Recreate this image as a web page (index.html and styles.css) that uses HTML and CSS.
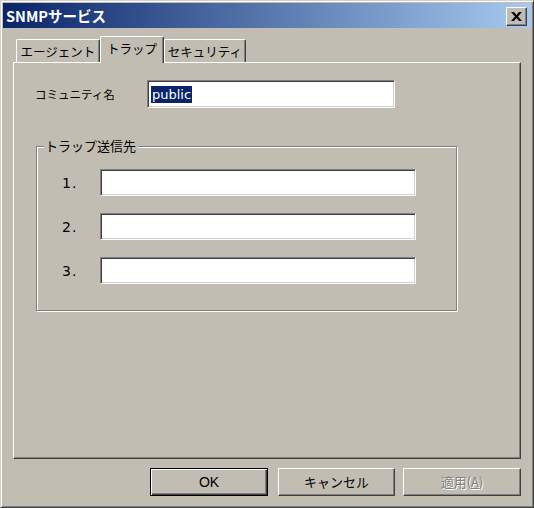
FILE: index.html
```html
<!DOCTYPE html>
<html lang="ja">
<head>
<meta charset="utf-8">
<title>SNMPサービス</title>
<link rel="stylesheet" href="styles.css">
</head>
<body>
<div class="window">
  <div class="titlebar">
    <span class="title">SNMPサービス</span>
    <div class="close">
      <svg width="11" height="9" viewBox="0 0 11 9"><path d="M0 0h3l2.5 3 2.5-3h3l-4 4.5 4 4.5h-3l-2.5-3-2.5 3h-3l4-4.5z" fill="#000"/></svg>
    </div>
  </div>
  <div class="body">
    <div class="tabs">
      <div class="tab tab-agent">エージェント</div>
      <div class="tab tab-trap active">トラップ</div>
      <div class="tab tab-sec">セキュリティ</div>
    </div>
    <div class="panel">
      <div class="field-row">
        <span class="label">コミュニティ名</span>
        <div class="input community"><span class="sel">public</span></div>
      </div>
      <div class="group">
        <span class="legend">トラップ送信先</span>
        <div class="dest"><span class="num">1.</span><div class="input dest-input"></div></div>
        <div class="dest"><span class="num">2.</span><div class="input dest-input"></div></div>
        <div class="dest"><span class="num">3.</span><div class="input dest-input"></div></div>
      </div>
    </div>
    <div class="buttons">
      <div class="btn default"><span class="btn-face">OK</span></div>
      <div class="btn cancel"><span class="btn-face">キャンセル</span></div>
      <div class="btn apply disabled"><span class="btn-face">適用(<u>A</u>)</span></div>
    </div>
  </div>
</div>
</body>
</html>
```
FILE: styles.css
```css
html, body {
  margin: 0;
  padding: 0;
  background: #c1bdb2;
}
body {
  font-family: "Noto Sans CJK JP", sans-serif;
  font-size: 12px;
  font-weight: normal;
  color: #000;
}
.window {
  width: 534px;
  height: 508px;
  box-sizing: border-box;
  border: 1px solid;
  border-color: #d4d0c8 #404040 #404040 #d4d0c8;
  box-shadow: inset 1px 1px #fff, inset -1px -1px #808080;
  padding: 2px;
  display: flex;
  flex-direction: column;
  background: #c1bdb2;
}
.titlebar {
  height: 25px;
  flex: none;
  background: linear-gradient(90deg, #0a246a 0%, #a6caf0 100%);
  display: flex;
  align-items: center;
  justify-content: space-between;
  padding: 0 4px 0 3px;
}
.title {
  color: #fff;
  font-weight: bold;
  font-size: 14.5px;
  line-height: 25px;
}
.close {
  width: 21px;
  height: 19px;
  box-sizing: border-box;
  background: #c1bdb2;
  border: 1px solid;
  border-color: #fff #404040 #404040 #fff;
  box-shadow: inset -1px -1px #808080;
  display: flex;
  align-items: center;
  justify-content: center;
  margin-top: 1px;
}
.close svg {
  display: block;
  margin-left: -1px;
}
.body {
  flex: 1;
  display: flex;
  flex-direction: column;
  padding: 8px 10px 0 10px;
}
.tabs {
  display: flex;
  align-items: flex-end;
  height: 26px;
  padding-left: 3px;
  position: relative;
  z-index: 1;
}
.tab {
  box-sizing: border-box;
  height: 23px;
  border-top: 1px solid #fff;
  border-left: 1px solid #fff;
  border-right: 1px solid #404040;
  box-shadow: inset -1px 0 #808080;
  border-top-left-radius: 2px;
  border-top-right-radius: 2px;
  display: flex;
  align-items: center;
  justify-content: center;
  background: #c1bdb2;
  padding-top: 1px;
  font-size: 12.5px;
}
.tab-agent { width: 84px; }
.tab-trap { width: 64px; }
.tab-sec { width: 82px; }
.tab.active {
  height: 27px;
  margin-bottom: -1px;
  padding-bottom: 4px;
}
.panel {
  box-sizing: border-box;
  width: 508px;
  height: 397px;
  border: 1px solid;
  border-color: #fff #404040 #404040 #fff;
  box-shadow: inset -1px -1px #808080;
  padding-top: 17px;
  display: flex;
  flex-direction: column;
}
.field-row {
  display: flex;
  align-items: center;
  padding-left: 21px;
}
.label {
  width: 112px;
  font-size: 11.5px;
}
.input {
  box-sizing: border-box;
  background: #fff;
  border: 1px solid;
  border-color: #808080 #fff #fff #808080;
  box-shadow: inset 1px 1px #404040, inset -1px -1px #d4d0c8;
}
.community {
  width: 248px;
  height: 28px;
  display: flex;
  align-items: center;
  padding-left: 3px;
}
.sel {
  background: #0a246a;
  color: #fff;
  font-family: "DejaVu Sans", sans-serif;
  font-size: 13px;
  line-height: 17px;
  padding: 0 1px;
}
.group {
  position: relative;
  box-sizing: border-box;
  width: 421px;
  height: 165px;
  margin: 38px 0 0 22px;
  border: 1px solid #808080;
  box-shadow: inset 1px 1px #fff, 1px 1px #fff;
  padding: 22px 0 0 25px;
  display: flex;
  flex-direction: column;
  gap: 17px;
}
.legend {
  position: absolute;
  left: 7px;
  top: -10px;
  background: #c1bdb2;
  padding: 0 2px 0 1px;
  font-size: 13px;
  line-height: 18px;
}
.dest {
  display: flex;
  align-items: center;
}
.num {
  width: 38px;
  font-family: "DejaVu Sans", sans-serif;
  font-size: 14px;
  letter-spacing: 1px;
}
.dest-input {
  width: 316px;
  height: 27px;
}
.buttons {
  display: flex;
  justify-content: flex-end;
  margin-top: 9px;
}
.btn {
  box-sizing: border-box;
  height: 28px;
  width: 117px;
  border: 1px solid;
  border-color: #fff #404040 #404040 #fff;
  box-shadow: inset -1px -1px #808080;
  display: flex;
  align-items: center;
  justify-content: center;
}
.btn.default {
  width: 118px;
  border: 1px solid #000;
  box-shadow: inset 1px 1px #fff, inset -1px -1px #404040, inset -2px -2px #808080;
  margin-right: 10px;
}
.btn.cancel {
  margin-right: 8px;
}
.btn.apply {
  width: 118px;
}
.btn-face {
  font-size: 13px;
  line-height: 16px;
}
.btn.default .btn-face {
  font-family: "Liberation Sans", sans-serif;
  font-size: 14px;
}
.btn.disabled .btn-face {
  color: #808080;
  text-shadow: 1px 1px #fff;
}
```
